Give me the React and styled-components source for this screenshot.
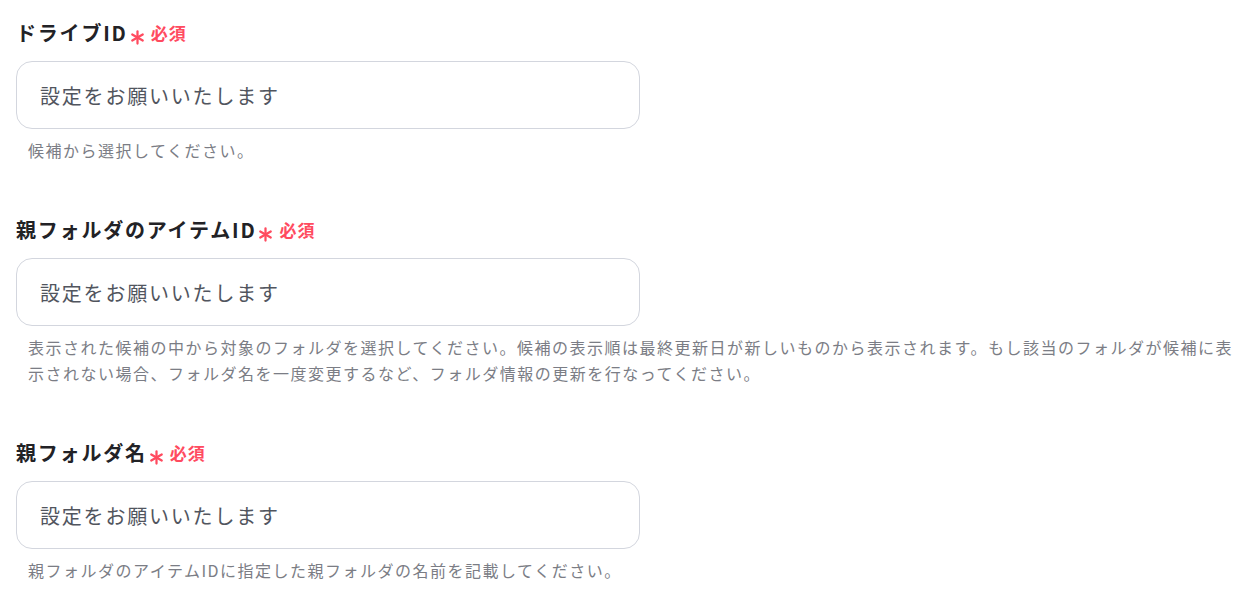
import styled, { createGlobalStyle } from 'styled-components'

const GlobalStyle = createGlobalStyle`
  body {
    margin: 0;
    background: #ffffff;
    font-family: "Noto Sans CJK JP", "Noto Sans", sans-serif;
  }
`

const fields = [
  {
    label: 'ドライブID',
    help: '候補から選択してください。',
  },
  {
    label: '親フォルダのアイテムID',
    help: '表示された候補の中から対象のフォルダを選択してください。候補の表示順は最終更新日が新しいものから表示されます。もし該当のフォルダが候補に表示されない場合、フォルダ名を一度変更するなど、フォルダ情報の更新を行なってください。',
  },
  {
    label: '親フォルダ名',
    help: '親フォルダのアイテムIDに指定した親フォルダの名前を記載してください。',
  },
]

const AsteriskIcon = () => (
  <AsteriskSvg viewBox="0 0 16 16" aria-hidden="true">
    <g stroke="#ff4b5f" strokeWidth="2.4" strokeLinecap="round">
      <line x1="8" y1="1.5" x2="8" y2="14.5" />
      <line x1="2.4" y1="4.75" x2="13.6" y2="11.25" />
      <line x1="2.4" y1="11.25" x2="13.6" y2="4.75" />
    </g>
  </AsteriskSvg>
)

const App = () => {
  return (
    <Page>
      <GlobalStyle />
      {fields.map((f) => (
        <Field key={f.label}>
          <LabelRow>
            <Label>{f.label}</Label>
            <AsteriskIcon />
            <Required>必須</Required>
          </LabelRow>
          <Input placeholder="設定をお願いいたします" />
          <Help>{f.help}</Help>
        </Field>
      ))}
    </Page>
  )
}

export default App

const Page = styled.div`
  display: flex;
  flex-direction: column;
  gap: 52px;
  padding: 18px 0 0 16px;
`

const Field = styled.div`
  display: flex;
  flex-direction: column;
`

const LabelRow = styled.div`
  display: flex;
  align-items: center;
  height: 30px;
`

const Label = styled.span`
  font-size: 20px;
  font-weight: 700;
  letter-spacing: 1.8px;
  color: #222226;
  line-height: 30px;
`

const AsteriskSvg = styled.svg`
  width: 15px;
  height: 15px;
  margin: 9px 6px 0 2px;
`

const Required = styled.span`
  font-size: 17px;
  font-weight: 700;
  color: #ff4b5f;
  letter-spacing: 1px;
  line-height: 30px;
`

const Input = styled.input`
  box-sizing: border-box;
  width: 624px;
  height: 68px;
  margin-top: 13px;
  padding: 0 23px;
  border: 1px solid #d3d6de;
  border-radius: 16px;
  font-family: inherit;
  font-size: 20px;
  letter-spacing: 1.8px;
  color: #333;
  outline: none;
  &::placeholder {
    color: #51555e;
  }
`

const Help = styled.p`
  margin: 8px 0 0;
  padding-left: 12px;
  font-size: 16px;
  letter-spacing: 1.5px;
  line-height: 26px;
  color: #7b7d85;
`
